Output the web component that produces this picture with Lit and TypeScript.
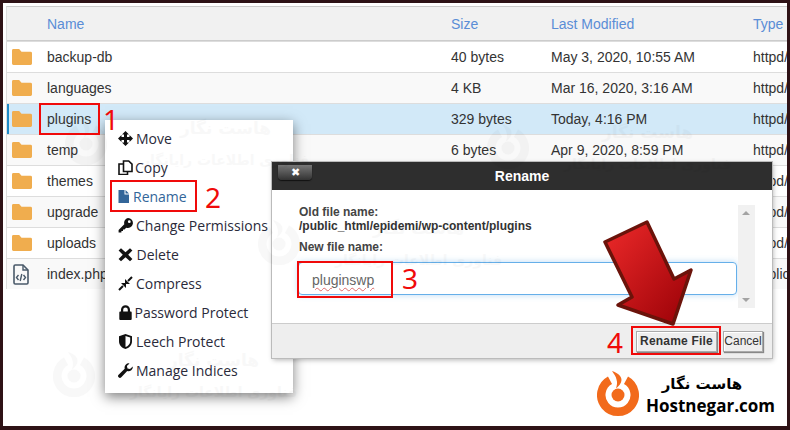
import { LitElement, css, html, svg } from 'lit'
import { customElement } from 'lit/decorators.js'

type FileRow = {
  name: string;
  size: string;
  modified: string;
  type: string;
  selected?: boolean;
  code?: boolean;
}

const rows: FileRow[] = [
  { name: 'backup-db', size: '40 bytes', modified: 'May 3, 2020, 10:55 AM', type: 'httpd/unix-directory' },
  { name: 'languages', size: '4 KB', modified: 'Mar 16, 2020, 3:16 AM', type: 'httpd/unix-directory' },
  { name: 'plugins', size: '329 bytes', modified: 'Today, 4:16 PM', type: 'httpd/unix-directory', selected: true },
  { name: 'temp', size: '6 bytes', modified: 'Apr 9, 2020, 8:59 PM', type: 'httpd/unix-directory' },
  { name: 'themes', size: '', modified: '', type: 'httpd/unix-directory' },
  { name: 'upgrade', size: '', modified: '', type: 'httpd/unix-directory' },
  { name: 'uploads', size: '', modified: '', type: 'httpd/unix-directory' },
  { name: 'index.php', size: '', modified: '', type: 'application/x-httpd-php', code: true },
]

const folderIcon = html`<svg width="20" height="16" viewBox="0 0 21 17" preserveAspectRatio="none"><path fill="#f0ad4e" d="M1.500 0h6l2.500 3h9.500q1.500 0 1.500 1.500v11q0 1.500-1.500 1.500h-18q-1.500 0-1.500-1.500v-14q0-1.500 1.500-1.500z"/></svg>`

const codeIcon = html`<svg width="16" height="21" viewBox="0 0 16 21"><path fill="none" stroke="#4a5a6a" stroke-width="1.600" d="M1 2.200q0-1.200 1.200-1.200h7.800l5 5v12.800q0 1.200-1.200 1.200H2.200q-1.200 0-1.200-1.200z"/><path fill="none" stroke="#4a5a6a" stroke-width="1.400" d="M10 1v5h5M5.500 11l-2 2.500 2 2.500M10.500 11l2 2.500-2 2.500M8.800 10l-1.600 7"/></svg>`

const menuIcons: Record<string, unknown> = {
  move: svg`<path d="M7.500 0L11 3.500H9V6h2.500V4L15 7.500 11.500 11V9H9v2.500h2L7.500 15 4 11.500h2V9H3.500v2L0 7.500 3.500 4v2H6V3.500H4z"/>`,
  copy: svg`<path fill="none" stroke="#111" stroke-width="1.600" d="M5.500 1h5.200l3.300 3.200V11.500H5.500zM5.500 4H1v10.500h8.500v-3"/>`,
  rename: svg`<path fill="#336699" d="M.5 1h6v4.500H11V14H.5zM7.500 1L11 4.500H7.500z"/>`,
  key: svg`<path d="M10 0a5 5 0 1 1-1.800 9.700L6.500 11.400H5V13H3.400v1.600H.6V12l5.700-5.800A5 5 0 0 1 10 0zm1.300 2.300a1.400 1.400 0 1 0 0 2.800 1.400 1.400 0 0 0 0-2.800z"/>`,
  del: svg`<path d="M3 1.200L7.500 5.200 12 1.200l2.400 2.400-4.200 4.100 4.200 4.200-2.400 2.400-4.500-4.100L3 14.300.6 11.900l4.200-4.200L.6 3.600z"/>`,
  compress: svg`<path d="M7 8V3l5 5zM8 7v5L3 7z"/><path fill="none" stroke="#111" stroke-width="2" d="M1 14l4-4M14 1l-4 4"/>`,
  lock: svg`<path d="M3 6.500V4.800a4.500 4.500 0 0 1 9 0v1.700h.8q.9 0 .9.900v6.700q0 .9-.9.900H2.200q-.9 0-.9-.9V7.400q0-.9.900-.9zm2.200 0h4.600V4.800a2.300 2.300 0 0 0-4.600 0z"/>`,
  shield: svg`<path fill-rule="evenodd" d="M7.500 0L14 2.200v5c0 4-3 6.800-6.500 7.800C4 14 1 11.200 1 7.200v-5zm0 2v11c2.600-.9 4.700-3 4.700-5.800V3.500z"/>`,
  wrench: svg`<path d="M14.800 3.500a4.300 4.300 0 0 1-5.600 4.600L3.300 14.300a1.800 1.800 0 0 1-2.700-2.600l6.100-6A4.300 4.300 0 0 1 11.500.4L8.900 3l.6 2.500 2.500.6z"/>`,
}

const menu = [
  { label: 'Move', icon: 'move', gap: 3 },
  { label: 'Copy', icon: 'copy', gap: 2 },
  { label: 'Rename', icon: 'rename', gap: 0, active: true },
  { label: 'Change Permissions', icon: 'key', gap: 3 },
  { label: 'Delete', icon: 'del', gap: 3.5 },
  { label: 'Compress', icon: 'compress', gap: 3 },
  { label: 'Password Protect', icon: 'lock', gap: 1.5 },
  { label: 'Leech Protect', icon: 'shield', gap: 3 },
  { label: 'Manage Indices', icon: 'wrench', gap: 3 },
]

const logoMark = (color = '#f26a1b') => svg`
  <path fill="none" stroke=${color} stroke-width="8.500" d="M13 11.300A16.750 16.750 0 1 0 29 11.300"/>
  <circle cx="21" cy="26" r="6.500" fill=${color}/>
  <path fill=${color} d="M15 2c6 2 9.500 5 9.500 9 0 3-2.500 6-5.500 8.500 1-3.500 1.500-6 .5-9C19 7.500 17 5 15 2z"/>
`

const watermarks = [
  { x: 62, y: 115 },
  { x: 484, y: 119 },
  { x: 50, y: 347 },
  { x: 255, y: 215 },
]

@customElement('app-root')
export default class AppRoot extends LitElement {
  private _watermark(w: { x: number; y: number }) {
    return html`
      <div class="wm" style="left:${w.x}px;top:${w.y}px">
        <svg width="42" height="50" viewBox="0 0 42 50">${logoMark('#000')}</svg>
        <div class="wm-text">
          <span class="wm-a">هاست نگار</span>
          <span class="wm-b">فناوری اطلاعات رایانگار</span>
        </div>
      </div>
    `
  }

  render() {
    return html`
    <div class="frame">
      <div class="table">
        <div class="row head">
          <span></span><span>Name</span><span>Size</span><span>Last Modified</span><span>Type</span>
        </div>
        ${rows.map(row => html`
          <div class="row ${row.selected ? 'selected' : ''}">
            <span class="ic">${row.code ? codeIcon : folderIcon}</span>
            <span>${row.name}</span>
            <span>${row.size}</span>
            <span>${row.modified}</span>
            <span>${row.type}</span>
          </div>
        `)}
      </div>

      <div class="menu">
        ${menu.map(item => html`
          <div class="item ${item.active ? 'active' : ''}" style="gap:${item.gap}px">
            <svg width="15" height="15" viewBox="0 0 15 15" fill="#111">${menuIcons[item.icon]}</svg>
            <span>${item.label}</span>
          </div>
        `)}
      </div>

      <div class="dialog">
        <div class="title">
          <div class="close">✖</div>
          <strong>Rename</strong>
        </div>
        <div class="body">
          <div class="fields">
            <div class="lbl">Old file name:</div>
            <div class="lbl path">/public_html/epidemi/wp-content/plugins</div>
            <div class="lbl new">New file name:</div>
            <div class="input"><span>pluginswp</span></div>
          </div>
          <div class="scroll"><i class="up"></i><i class="down"></i></div>
        </div>
        <div class="foot">
          <button class="primary">Rename File</button>
          <button class="cancel">Cancel</button>
        </div>
      </div>

      ${watermarks.map(w => this._watermark(w))}

      <div class="mark" style="left:36px;top:100px;width:57px;height:28px"></div>
      <div class="mark" style="left:107px;top:177px;width:83px;height:28px"></div>
      <div class="mark" style="left:294px;top:258px;width:92px;height:33px"></div>
      <div class="mark" style="left:628px;top:323px;width:86px;height:25px"></div>
      <div class="num" style="left:100px;top:99px">1</div>
      <div class="num" style="left:202px;top:177px">2</div>
      <div class="num" style="left:399px;top:258px">3</div>
      <div class="num" style="left:604px;top:322px">4</div>

      <svg class="arrow" width="100" height="112" viewBox="600 218 100 112">
        <defs>
          <linearGradient id="arrowFill" x1="0" y1="0" x2="1" y2="1">
            <stop offset="0" stop-color="#ee2a2a"/>
            <stop offset="1" stop-color="#980006"/>
          </linearGradient>
        </defs>
        <path fill="url(#arrowFill)" stroke="#6b130a" stroke-width="3.500" stroke-linejoin="round"
          d="M673 324L618 305 632 297 605 242 647 222 674 279 691 270z"/>
      </svg>

      <div class="brand">
        <svg width="42" height="50" viewBox="0 0 42 50">${logoMark()}</svg>
        <div class="brand-text">
          <span class="fa">هاست نگار</span>
          <span class="en">Hostnegar.com</span>
        </div>
      </div>
    </div>
    `
  }

  static styles = css`
:host {
  display: block;
  width: 790px;
  height: 430px;
  overflow: hidden;
  background: #2e1216;
}
.frame {
  position: absolute;
  top: 3px;
  left: 3px;
  right: 3px;
  bottom: 4px;
  background: #fff;
  padding: 3px 0 0 3px;
  overflow: hidden;
  font-family: "Liberation Sans", Arial, sans-serif;
  box-sizing: border-box;
}
.table {
  border-top: 1px solid #ccc;
  border-left: 1px solid #ddd;
  font-size: 14px;
  color: #333;
}
.row {
  display: grid;
  grid-template-columns: 40px 404px 100px 202px 200px;
  align-items: center;
  height: 30px;
  border-top: 1px solid #ddd;
  white-space: nowrap;
  background: #fff;
}
.row:nth-child(odd) {
  background: #f9f9f9;
}
.row.head {
  height: 33px;
  border-top: none;
  border-bottom: 1px solid #ccc;
  background: #f1f1f1;
  color: #5a8dd6;
}
.row.selected {
  background: #d2e9f8;
  box-shadow: inset 2px 0 0 #1f8ac9;
}
.ic {
  display: flex;
  padding-left: 5px;
}
.row:last-child .ic {
  padding-left: 6px;
}
.menu {
  position: absolute;
  left: 102px;
  top: 117px;
  width: 188px;
  height: 273px;
  box-sizing: border-box;
  padding: 4px 0 0 13px;
  background: #fff;
  box-shadow: 0 4px 12px rgba(0, 0, 0, 0.5);
  font-family: "Open Sans", sans-serif;
  font-size: 14px;
  color: #2a2a3a;
}
.item {
  display: flex;
  align-items: center;
  height: 29px;
  white-space: nowrap;
}
.item.active {
  color: #336699;
}
.dialog {
  position: absolute;
  left: 269px;
  top: 159px;
  width: 500px;
  height: 196px;
  display: flex;
  flex-direction: column;
  background: #fff;
  box-shadow: 0 0 0 1px #bbb, 1px 2px 5px rgba(0, 0, 0, 0.3);
}
.title {
  position: relative;
  display: flex;
  align-items: center;
  justify-content: center;
  height: 28px;
  flex: none;
  background: #2e2e2e;
  color: #fff;
  font-size: 14px;
}
.close {
  position: absolute;
  left: 6px;
  top: 3px;
  width: 34px;
  height: 15px;
  border-radius: 0 0 4px 4px;
  background: linear-gradient(#777, #333);
  box-shadow: 0 1px 1px #111;
  color: #fff;
  font-size: 11px;
  line-height: 15px;
  text-align: center;
}
.body {
  flex: 1;
  display: flex;
  padding: 15px 17px 15px 26px;
  min-height: 0;
}
.fields {
  flex: 1;
  padding-left: 1px;
}
.lbl {
  font-size: 12px;
  font-weight: bold;
  line-height: 14px;
  color: #444;
}
.path {
  color: #333;
}
.new {
  margin-top: 7px;
  margin-bottom: 8px;
}
.input {
  margin-left: -1px;
  height: 33px;
  box-sizing: border-box;
  display: flex;
  align-items: center;
  padding: 3px 0 0 13px;
  border: 1px solid #66afe9;
  border-radius: 4px;
  box-shadow: 0 0 6px rgba(102, 175, 233, 0.45);
  font-size: 14px;
  color: #666;
}
.input span {
  text-decoration: underline wavy #e06a6a 1px;
  text-underline-offset: 2px;
}
.scroll {
  position: relative;
  flex: none;
  width: 17px;
  margin-left: 1px;
  background: #f1f1f1;
}
.scroll i {
  position: absolute;
  left: 4px;
  width: 0;
  height: 0;
  border-left: 4px solid transparent;
  border-right: 4px solid transparent;
}
.up {
  top: 6px;
  border-bottom: 4px solid #a3a3a3;
}
.down {
  bottom: 6px;
  border-top: 4px solid #a3a3a3;
}
.foot {
  flex: none;
  height: 35px;
  display: flex;
  align-items: center;
  justify-content: flex-end;
  gap: 6px;
  padding-right: 9px;
  background: #eee;
  border-top: 1px solid #ccc;
  box-sizing: border-box;
}
button {
  height: 21px;
  padding: 0;
  border: 1px solid #aaa;
  background: #eee;
  box-shadow: inset 1px 1px 0 #fff, 1px 1px 1px #888;
  font: 12px "Liberation Sans", Arial, sans-serif;
  color: #333;
}
button.primary {
  width: 81px;
  font-weight: bold;
  letter-spacing: 0.2px;
}
button.cancel {
  width: 40px;
}
.mark {
  position: absolute;
  border: 2px solid #f00a0a;
}
.num {
  position: absolute;
  font-family: "Noto Sans", sans-serif;
  font-size: 28px;
  line-height: 34px;
  color: #f00a0a;
}
.arrow {
  position: absolute;
  left: 597px;
  top: 215px;
}
.brand {
  position: absolute;
  left: 594px;
  top: 366px;
  display: flex;
  gap: 7px;
  align-items: flex-start;
}
.brand-text {
  display: flex;
  flex-direction: column;
  align-items: center;
  padding-top: 5px;
  color: #000;
}
.fa {
  font-family: "DejaVu Sans", sans-serif;
  font-size: 15px;
  font-weight: bold;
  line-height: 21px;
  margin-right: 17px;
}
.en {
  font-family: "Open Sans", sans-serif;
  font-size: 17px;
  font-weight: 700;
  line-height: 22px;
}
.wm {
  position: absolute;
  display: flex;
  gap: 35px;
  align-items: flex-start;
  opacity: 0.022;
  pointer-events: none;
}
.wm-text {
  display: flex;
  flex-direction: column;
  align-items: center;
  font-family: "DejaVu Sans", sans-serif;
  font-weight: bold;
}
.wm-a {
  font-size: 17px;
}
.wm-b {
  font-size: 14px;
  white-space: nowrap;
  margin-top: 14px;
}
`
}

declare global {
  interface HTMLElementTagNameMap {
    'app-root': AppRoot
  }
}
